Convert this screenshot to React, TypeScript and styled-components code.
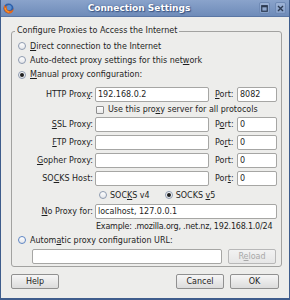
import React from "react";
import styled, { createGlobalStyle } from "styled-components";

const GlobalStyle = createGlobalStyle`
  html, body { margin: 0; padding: 0; background: #ededeb; }
  body {
    font-family: "DejaVu Sans", "Liberation Sans", sans-serif;
    font-size: 8px;
    color: #1e1e1e;
  }
  * { box-sizing: border-box; }
`;

const Window = styled.div`
  width: 290px;
  height: 300px;
  display: flex;
  flex-direction: column;
  background: #ededeb;
  border-left: 1px solid #3f5d8c;
  border-right: 1px solid #3f5d8c;
  border-bottom: 2px solid #3f5d8c;
`;

const TitleBar = styled.div`
  height: 17px;
  flex: none;
  display: grid;
  grid-template-columns: 16px 1fr auto;
  align-items: center;
  padding: 0 3px 0 2px;
  background: linear-gradient(#8aa3cb, #6e8bb9);
  border-bottom: 1px solid #5a76a4;
`;

const Title = styled.div`
  text-align: center;
  color: #ffffff;
  font-weight: bold;
  font-size: 9px;
  text-shadow: 1px 1px 1px #3a5482, 0 0 2px #4a6592;
`;

const TitleButtons = styled.div`
  display: flex;
  gap: 5px;
`;

const TitleButton = styled.div`
  width: 11px;
  height: 12px;
  display: grid;
  place-items: center;
  background: linear-gradient(#9db3d6, #86a0c9);
  border: 1px solid #6f8ab5;
  border-radius: 2px;
`;

const Body = styled.div`
  flex: 1;
  display: flex;
  flex-direction: column;
  padding: 9px 7px 0 10px;
`;

const Frame = styled.fieldset`
  margin: 0;
  border: 1px solid #a2a2a0;
  border-radius: 3px;
  padding: 3px 3px 2px 6px;
  display: flex;
  flex-direction: column;
`;

const Legend = styled.legend`
  padding: 0 2px;
  margin-left: -3px;
  line-height: 10px;
`;

const OptionRow = styled.label<{ $h?: number; $mt?: number }>`
  display: flex;
  align-items: center;
  gap: 4px;
  height: ${(p) => p.$h ?? 14}px;
  margin-top: ${(p) => p.$mt ?? 0}px;
`;

const RadioMark = styled.span<{ $checked?: boolean; $focus?: boolean }>`
  width: 8px;
  height: 8px;
  flex: none;
  border-radius: 50%;
  border: 1px solid ${(p) => (p.$focus ? "#5e86c4" : "#8e9bb0")};
  background: linear-gradient(#ffffff, #e4e6ea);
  display: grid;
  place-items: center;
  &::after {
    content: "";
    width: 4px;
    height: 4px;
    border-radius: 50%;
    background: ${(p) => (p.$checked ? "#1e1e1e" : "transparent")};
  }
`;

const CheckMark = styled.span`
  width: 8px;
  height: 8px;
  flex: none;
  border: 1px solid #8e8e8e;
  border-radius: 1px;
  background: linear-gradient(#ffffff, #e8e8e8);
`;

const ProxyGrid = styled.div`
  display: grid;
  grid-template-columns: 77px 114px 28px 40px;
  grid-template-rows: 15px 9px 15px 15px 15px 15px 12px 15px 9px;
  row-gap: 3px;
  margin-top: 5px;
  align-items: center;
`;

const FieldLabel = styled.span`
  text-align: right;
  padding-right: 2px;
  white-space: nowrap;
`;

const PortLabel = styled.span`
  padding-left: 6px;
  white-space: nowrap;
`;

const TextInput = styled.input`
  height: 15px;
  width: 100%;
  min-width: 0;
  margin: 0;
  border: 1px solid #a6a6a4;
  border-radius: 2px;
  background: #ffffff;
  padding: 0 2px;
  font-family: "DejaVu Sans", "Liberation Sans", sans-serif;
  font-size: 8px;
  color: #1e1e1e;
  outline: none;
`;

const SpanRow = styled.div<{ $pl?: number; $gap?: number }>`
  grid-column: 2 / 5;
  display: flex;
  align-items: center;
  gap: ${(p) => p.$gap ?? 0}px;
  padding-left: ${(p) => p.$pl ?? 0}px;
`;

const InlineOption = styled.label<{ $gap?: number }>`
  display: flex;
  align-items: center;
  gap: ${(p) => p.$gap ?? 3}px;
`;

const WideInput = styled(TextInput)`
  grid-column: 2 / 5;
`;

const Hint = styled.div`
  grid-column: 2 / 5;
  padding-left: 1px;
  white-space: nowrap;
  letter-spacing: -0.2px;
`;

const UrlRow = styled.div`
  display: flex;
  align-items: center;
  gap: 6px;
  margin-top: 3px;
  padding-left: 14px;
  padding-right: 2px;
`;

const Button = styled.button<{ $w?: number; $disabled?: boolean }>`
  width: ${(p) => p.$w ?? 48}px;
  height: 15px;
  flex: none;
  margin: 0;
  padding: 0;
  border: 1px solid ${(p) => (p.$disabled ? "#b8b8b8" : "#909090")};
  border-radius: 2px;
  background: ${(p) =>
    p.$disabled ? "linear-gradient(#f2f2f2, #e6e6e6)" : "linear-gradient(#f6f6f6, #dcdcdc)"};
  font-family: "DejaVu Sans", "Liberation Sans", sans-serif;
  font-size: 8px;
  color: ${(p) => (p.$disabled ? "#a8a8a8" : "#1e1e1e")};
`;

const ButtonRow = styled.div`
  display: flex;
  align-items: center;
  gap: 6px;
  margin-top: 7px;
  padding-right: 3px;
`;

const Spacer = styled.div`
  flex: 1;
`;

const FirefoxIcon = () => (
  <svg width="11" height="11" viewBox="0 0 11 11">
    <circle cx="5.5" cy="5.5" r="5" fill="#2d5fa8" />
    <circle cx="6" cy="4.5" r="2.6" fill="#5b8fd0" />
    <path
      d="M1.6 1.8 C0 4.2 0.6 9.4 5.4 10.5 C8.6 10.9 10.8 8.4 10.6 5.2 C9.6 7.6 7.2 8.4 5.2 7.4 C3.4 6.4 3.1 4 4.3 2.6 C3.2 2.8 2.4 3.6 2.2 4.2 C2 3.2 2.2 2.4 1.6 1.8 Z"
      fill="#e8691a"
    />
    <path d="M2.2 5 C2.4 7.4 4 8.8 6 9" stroke="#f7b43a" strokeWidth="0.8" fill="none" />
  </svg>
);

const MaxIcon = () => (
  <svg width="7" height="7" viewBox="0 0 7 7">
    <rect x="0.75" y="0.75" width="5.5" height="5.5" fill="none" stroke="#2c3a52" strokeWidth="1.2" />
    <rect x="0.5" y="0.5" width="6" height="1.8" fill="#2c3a52" />
  </svg>
);

const CloseIcon = () => (
  <svg width="7" height="7" viewBox="0 0 7 7">
    <path d="M1 1 L6 6 M6 1 L1 6" stroke="#2c3a52" strokeWidth="1.4" />
  </svg>
);

export default function App() {
  return (
    <>
      <GlobalStyle />
      <Window>
        <TitleBar>
          <FirefoxIcon />
          <Title>Connection Settings</Title>
          <TitleButtons>
            <TitleButton>
              <MaxIcon />
            </TitleButton>
            <TitleButton>
              <CloseIcon />
            </TitleButton>
          </TitleButtons>
        </TitleBar>
        <Body>
          <Frame>
            <Legend>Configure Proxies to Access the Internet</Legend>
            <OptionRow>
              <RadioMark />
              <span>
                <u>D</u>irect connection to the Internet
              </span>
            </OptionRow>
            <OptionRow>
              <RadioMark />
              <span>
                Auto-detect proxy settings for this net<u>w</u>ork
              </span>
            </OptionRow>
            <OptionRow $h={15}>
              <RadioMark $checked />
              <span>
                <u>M</u>anual proxy configuration:
              </span>
            </OptionRow>
            <ProxyGrid>
              <FieldLabel>
                HTTP Prox<u>y</u>:
              </FieldLabel>
              <TextInput defaultValue="192.168.0.2" />
              <PortLabel>
                <u>P</u>ort:
              </PortLabel>
              <TextInput defaultValue="8082" />

              <SpanRow $pl={1}>
                <InlineOption $gap={4}>
                  <CheckMark />
                  <span>
                    Use this pro<u>x</u>y server for all protocols
                  </span>
                </InlineOption>
              </SpanRow>

              <FieldLabel>
                <u>S</u>SL Proxy:
              </FieldLabel>
              <TextInput />
              <PortLabel>
                P<u>o</u>rt:
              </PortLabel>
              <TextInput defaultValue="0" />

              <FieldLabel>
                <u>F</u>TP Proxy:
              </FieldLabel>
              <TextInput />
              <PortLabel>
                Po<u>r</u>t:
              </PortLabel>
              <TextInput defaultValue="0" />

              <FieldLabel>
                <u>G</u>opher Proxy:
              </FieldLabel>
              <TextInput />
              <PortLabel>Port:</PortLabel>
              <TextInput defaultValue="0" />

              <FieldLabel>
                SO<u>C</u>KS Host:
              </FieldLabel>
              <TextInput />
              <PortLabel>
                Por<u>t</u>:
              </PortLabel>
              <TextInput defaultValue="0" />

              <SpanRow $pl={4} $gap={15}>
                <InlineOption>
                  <RadioMark />
                  <span>
                    SOC<u>K</u>S v4
                  </span>
                </InlineOption>
                <InlineOption>
                  <RadioMark $checked />
                  <span>
                    SOCKS <u>v</u>5
                  </span>
                </InlineOption>
              </SpanRow>

              <FieldLabel>
                <u>N</u>o Proxy for:
              </FieldLabel>
              <WideInput defaultValue="localhost, 127.0.0.1" />

              <Hint>Example: .mozilla.org, .net.nz, 192.168.1.0/24</Hint>
            </ProxyGrid>
            <OptionRow $h={12} $mt={3}>
              <RadioMark $focus />
              <span>
                Autom<u>a</u>tic proxy configuration URL:
              </span>
            </OptionRow>
            <UrlRow>
              <TextInput />
              <Button $w={48} $disabled>
                R<u>e</u>load
              </Button>
            </UrlRow>
          </Frame>
          <ButtonRow>
            <Button>Help</Button>
            <Spacer />
            <Button>Cancel</Button>
            <Button $w={49}>OK</Button>
          </ButtonRow>
        </Body>
      </Window>
    </>
  );
}
